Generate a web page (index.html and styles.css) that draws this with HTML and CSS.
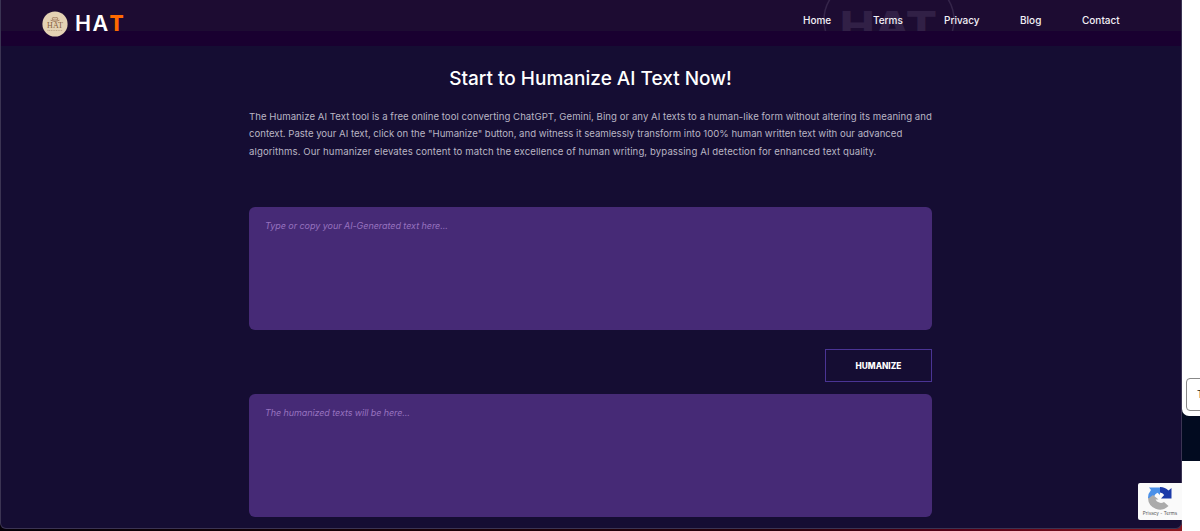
FILE: index.html
```html
<!DOCTYPE html>
<html lang="en">
<head>
<meta charset="utf-8">
<title>Humanize AI Text</title>
<link rel="stylesheet" href="styles.css">
</head>
<body>
<div class="screen">
  <div class="window">
    <header class="header">
      <svg class="watermark" width="160" height="31" viewBox="0 0 160 31" aria-hidden="true">
        <ellipse cx="73" cy="20" rx="65" ry="49"/>
        <text x="24" y="40" textLength="97" lengthAdjust="spacingAndGlyphs">HAT</text>
      </svg>
      <a class="brand">
        <svg class="seal" width="26" height="26" viewBox="0 0 26 26">
          <circle cx="13" cy="13" r="12.6" fill="#e4d2b4"/>
          <path d="M8.5 9.2q4.5 2.8 9 0M10 8.2q0-2.5 3-1.4 3-1.1 3 1.4M10 8.6q3 1 6 0" fill="none" stroke="#9a7455" stroke-width=".8"/>
          <text x="5" y="17" textLength="16">HAT</text>
          <path d="M5.5 19.5h15" stroke="#b49b7d" stroke-width=".8" stroke-dasharray="1 .7"/>
        </svg>
        <span class="wordmark">HA<b>T</b></span>
      </a>
      <nav class="nav"><a class="home">Home</a><a class="terms">Terms</a><a class="privacy">Privacy</a><a class="blog">Blog</a><a class="contact">Contact</a></nav>
    </header>
    <main class="main">
      <h1>Start to Humanize AI Text Now!</h1>
      <p class="intro">
        <span class="l1">The Humanize AI Text tool is a free online tool converting ChatGPT, Gemini, Bing or any AI texts to a human-like form without altering its meaning and</span>
        <span class="l2">context. Paste your AI text, click on the "Humanize" button, and witness it seamlessly transform into 100% human written text with our advanced</span>
        <span class="l3">algorithms. Our humanizer elevates content to match the excellence of human writing, bypassing AI detection for enhanced text quality.</span>
      </p>
      <div class="box"><span class="ph1">Type or copy your AI-Generated text here...</span></div>
      <button class="action">HUMANIZE</button>
      <div class="box"><span class="ph2">The humanized texts will be here...</span></div>
    </main>
    <div class="captcha">
      <svg width="24" height="24" viewBox="0 0 24 24">
        <path d="M0 12A12 12 0 0 1 3 4L1 1.500H12V9L9.500 6.800A6 6 0 0 0 6 12Z" fill="#4a90e8"/>
        <path d="M12 1A11.500 11.500 0 0 1 20.500 4.500L23.500 2V12.500H13L16.200 9A6 6 0 0 0 12 6.500Z" fill="#1c3aa9"/>
        <path d="M0 12H1L5 9L10.500 13.500H7.500A6 6 0 0 0 16 16L20.500 20A12 12 0 0 1 0 12Z" fill="#ababab"/>
      </svg>
      <span>Privacy - Terms</span>
    </div>
  </div>
  <aside class="side"><div class="panel"><div class="field">T</div></div><div class="gap"></div></aside>
</div>
</body>
</html>
```
FILE: styles.css
```css
* { box-sizing: border-box; }
body { margin: 0; font-family: Inter, "Noto Sans", sans-serif; }
.screen { display: flex; width: 1200px; height: 531px; overflow: hidden; background: linear-gradient(90deg, #050008 0, #130006 300px, #26000b 770px, #540016 960px, #8c1720 1182px); }
.window { position: relative; flex: none; width: 1182px; height: 529px; background: #150d33; border: 1px solid #3b3453; border-top: 0; border-radius: 0 0 6px 6px; }
.header { position: relative; display: flex; justify-content: space-between; height: 46px; background: linear-gradient(#1d0c32 0 31px, #190030 31px); padding: 0 60px 0 41px; }
.watermark { position: absolute; left: 815px; top: 0; fill: none; stroke: #35254a; stroke-width: 1.5; }
.watermark text { fill: #312046; stroke: none; font: 800 40px Inter, sans-serif; }
.brand { position: relative; display: flex; gap: 7px; padding-top: 11px; }
.seal text { font: 8px "Liberation Serif", serif; fill: #875e3d; }
.wordmark { color: #fff; font-size: 21.5px; line-height: 24px; font-weight: 600; letter-spacing: 1.4px; }
.wordmark b { color: #ff6a00; font-weight: 800; font-size: 21px; }
.nav { position: relative; display: flex; padding-top: 12px; color: #f3f0f6; font-size: 10px; line-height: 16px; font-weight: 500; white-space: nowrap; }
.home { width: 70px; } .terms { width: 71px; } .privacy { width: 76px; } .blog { width: 62px; } .contact { width: 39px; }
.main { width: 683px; margin-left: 248px; display: flex; flex-direction: column; }
h1 { margin: 19px 0 0; text-align: center; color: #fff; font-size: 19px; line-height: 28px; font-weight: 500; }
.intro { margin: 15px 0 47px; color: #b9b5c4; font-size: 9.6px; line-height: 17.4px; height: 52px; }
.intro span { display: block; width: max-content; white-space: nowrap; }
.l1 { letter-spacing: .045px; }
.l2 { letter-spacing: -.007px; }
.l3 { letter-spacing: .1px; }
.box { height: 123px; background: #462a76; border-radius: 6px; padding: 10.5px 16px; color: #9672bf; font-size: 9px; line-height: 16px; font-style: italic; }
.ph1 { letter-spacing: -.05px; }
.ph2 { letter-spacing: -.09px; }
.action { align-self: flex-end; width: 107px; height: 33px; margin: 19px 0 12px; padding: 0; border: 1px solid #4a3494; background: transparent; color: #fff; font: 800 8.3px Inter, sans-serif; }
.captcha { position: absolute; left: 1137px; top: 483px; width: 44px; height: 37px; background: #fafafa; border-radius: 2px 0 0 2px; display: flex; flex-direction: column; align-items: center; padding-top: 3px; font-size: 4.6px; line-height: 8px; color: #555; white-space: nowrap; }
.side { width: 18px; background: #fff; overflow: hidden; }
.panel { height: 416px; background: #fff; border-radius: 0 0 0 7px; padding: 378px 0 0 4px; position: relative; }
.field { width: 40px; height: 33px; border: 1px solid #888; border-radius: 4px; padding-left: 10px; font-size: 10px; line-height: 31px; color: #222; }
.gap { height: 54px; margin-top: -9px; background: #020b20; }
```
